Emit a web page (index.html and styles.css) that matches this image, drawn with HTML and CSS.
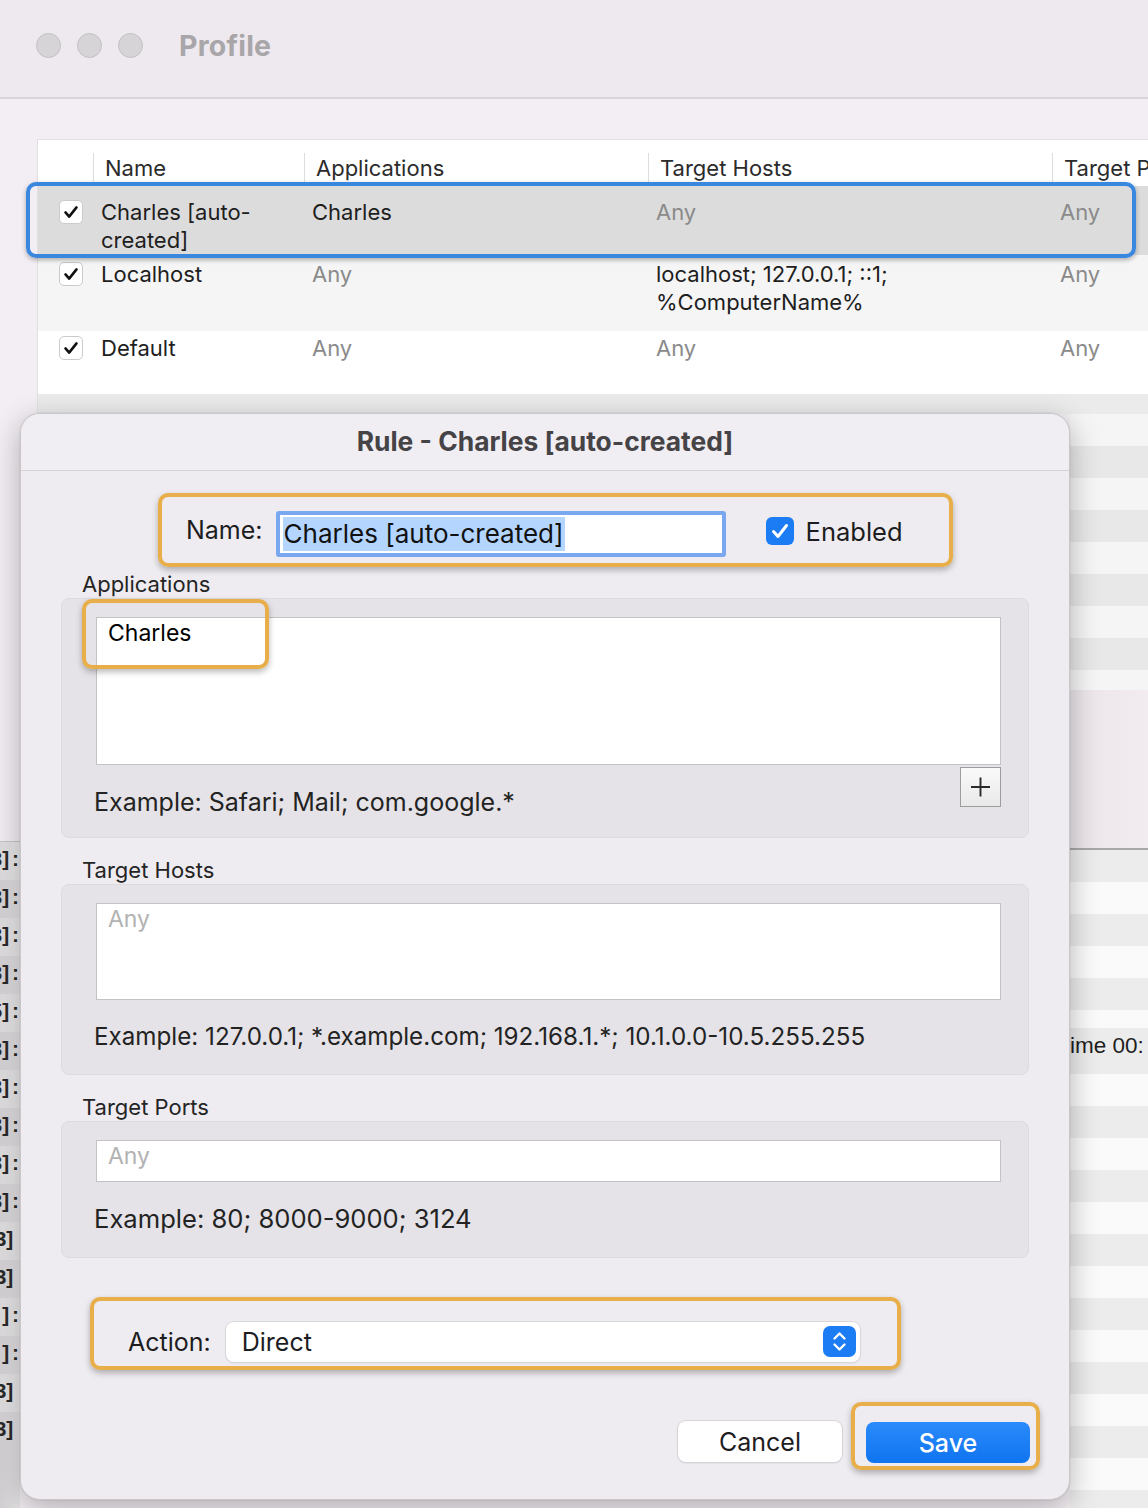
FILE: index.html
```html
<!DOCTYPE html>
<html>
<head>
<meta charset="utf-8">
<title>Profile</title>
<link rel="stylesheet" href="styles.css">
</head>
<body>
<div class="window">
  <header class="titlebar">
    <div class="lights"><span class="light"></span><span class="light"></span><span class="light"></span></div>
    <div class="wtitle">Profile</div>
  </header>
  <main class="content">
    <section class="table">
      <div class="thead">
        <div class="th th-first"></div>
        <div class="th">Name</div>
        <div class="th">Applications</div>
        <div class="th">Target Hosts</div>
        <div class="th">Target Ports</div>
      </div>
      <div class="tr tr-sel">
        <div class="td td-check"><span class="cbox"><svg viewBox="0 0 24 24" width="24" height="24"><path d="M6 12.5l4 4.5 8-10" fill="none" stroke="#111" stroke-width="2.8" stroke-linecap="round" stroke-linejoin="round"/></svg></span></div>
        <div class="td">Charles [auto-<br>created]</div>
        <div class="td">Charles</div>
        <div class="td muted">Any</div>
        <div class="td muted">Any</div>
      </div>
      <div class="tr tr-alt">
        <div class="td td-check"><span class="cbox"><svg viewBox="0 0 24 24" width="24" height="24"><path d="M6 12.5l4 4.5 8-10" fill="none" stroke="#111" stroke-width="2.8" stroke-linecap="round" stroke-linejoin="round"/></svg></span></div>
        <div class="td">Localhost</div>
        <div class="td muted">Any</div>
        <div class="td">localhost; 127.0.0.1; ::1;<br>%ComputerName%</div>
        <div class="td muted">Any</div>
      </div>
      <div class="tr tr-last">
        <div class="td td-check"><span class="cbox"><svg viewBox="0 0 24 24" width="24" height="24"><path d="M6 12.5l4 4.5 8-10" fill="none" stroke="#111" stroke-width="2.8" stroke-linecap="round" stroke-linejoin="round"/></svg></span></div>
        <div class="td">Default</div>
        <div class="td muted">Any</div>
        <div class="td muted">Any</div>
        <div class="td muted">Any</div>
      </div>
      <div class="tfill"></div>
      <div class="sel-ring"></div>
    </section>

    <section class="backdrop">
      <div class="bd-left">
        <div class="log">
          <div class="log-row"><span>3] :</span></div>
          <div class="log-row"><span>3] :</span></div>
          <div class="log-row"><span>3] :</span></div>
          <div class="log-row"><span>3] :</span></div>
          <div class="log-row"><span>5] :</span></div>
          <div class="log-row"><span>3] :</span></div>
          <div class="log-row"><span>3] :</span></div>
          <div class="log-row"><span>3] :</span></div>
          <div class="log-row"><span>3] :</span></div>
          <div class="log-row"><span>3] :</span></div>
          <div class="log-row"><span>3]&nbsp;&nbsp;</span></div>
          <div class="log-row"><span>3]&nbsp;&nbsp;</span></div>
          <div class="log-row"><span>] :</span></div>
          <div class="log-row"><span>] :</span></div>
          <div class="log-row"><span>3]&nbsp;&nbsp;</span></div>
          <div class="log-row"><span>3]&nbsp;&nbsp;</span></div>
        </div>
      </div>
      <div class="bd-mid"></div>
      <div class="bd-right">
        <div class="stripes-a"></div>
        <div class="bd-panel"></div>
        <div class="stripes-b">
          <div class="time-row">ime 00:</div>
        </div>
      </div>
    </section>
  </main>
</div>

<div class="dialog">
  <div class="dlg-head">Rule - Charles [auto-created]</div>
  <div class="dlg-body">
    <div class="hl name-row">
      <span class="lbl">Name:</span>
      <div class="name-input"><span class="selected">Charles [auto-created]</span></div>
      <span class="enable-box"><svg viewBox="0 0 28 28" width="28" height="28"><rect x="0" y="0" width="28" height="28" rx="6" fill="#1b7cf4"/><path d="M7.5 14.5l4.5 5 8.5-11" fill="none" stroke="#fff" stroke-width="3" stroke-linecap="round" stroke-linejoin="round"/></svg></span>
      <span class="enable-lbl">Enabled</span>
    </div>

    <div class="sec-label">Applications</div>
    <div class="group">
      <div class="field field-apps"><span class="val">Charles</span></div>
      <div class="foot foot-apps">
        <span class="example">Example: Safari; Mail; com.google.*</span>
        <span class="plus"><svg viewBox="0 0 40 40" width="39" height="38"><path d="M20 10v20M10 20h20" stroke="#2a2a2a" stroke-width="2"/></svg></span>
      </div>
      <div class="hl apps-hl"></div>
    </div>

    <div class="sec-label">Target Hosts</div>
    <div class="group">
      <div class="field field-hosts"><span class="ph">Any</span></div>
      <div class="foot foot-hosts">
        <span class="example">Example: 127.0.0.1; *.example.com; 192.168.1.*; 10.1.0.0-10.5.255.255</span>
      </div>
    </div>

    <div class="sec-label">Target Ports</div>
    <div class="group">
      <div class="field field-ports"><span class="ph">Any</span></div>
      <div class="foot foot-ports">
        <span class="example">Example: 80; 8000-9000; 3124</span>
      </div>
    </div>

    <div class="hl action-row">
      <span class="lbl">Action:</span>
      <div class="select">
        <span class="sel-val">Direct</span>
        <span class="stepper"><svg viewBox="0 0 33 31" width="33" height="31"><rect width="33" height="31" rx="7" fill="#1b7cf4"/><path d="M11.5 12.5l5-5 5 5M11.5 18.5l5 5 5-5" fill="none" stroke="#fff" stroke-width="2.4" stroke-linecap="round" stroke-linejoin="round"/></svg></span>
      </div>
    </div>

    <div class="buttons">
      <button class="btn btn-cancel">Cancel</button>
      <div class="hl save-hl"><button class="btn btn-save">Save</button></div>
    </div>
  </div>
</div>
</body>
</html>
```

FILE: styles.css
```css
* { box-sizing: border-box; }
html, body { margin: 0; padding: 0; }
body {
  width: 1148px;
  height: 1508px;
  overflow: hidden;
  position: relative;
  background: #f1ecf1;
  font-family: "Inter", "Noto Sans", sans-serif;
  color: #1d1d1f;
}

.window { width: 1148px; height: 1508px; display: flex; flex-direction: column; }

.titlebar {
  height: 99px;
  flex: none;
  background: #eee9ee;
  border-bottom: 2px solid #d9d4d9;
  display: flex;
  align-items: center;
  padding: 0 0 6px 36px;
}
.lights { display: flex; gap: 16px; }
.light {
  width: 25px; height: 25px; border-radius: 50%;
  background: #d7d4d7;
  border: 1px solid #c3c0c3;
}
.wtitle {
  margin-left: 36px;
  font-size: 28.5px;
  font-weight: 700;
  color: #a9a6a9;
  letter-spacing: 0.2px;
}

.content { flex: 1; display: flex; flex-direction: column; background: #f3eef3; }

/* table */
.table {
  position: relative;
  margin: 40px 0 0 37px;
  background: #fff;
  border-top: 1px solid #e2dfe2;
  border-left: 1px solid #e2dfe2;
  font-size: 22px;
}
.thead, .tr {
  display: grid;
  grid-template-columns: 55px 211px 344px 404px 1fr;
}
.thead { height: 46px; }
.th {
  margin-top: 13px;
  height: 33px;
  line-height: 31px;
  border-left: 1px solid #dddddd;
  padding-left: 11px;
  color: #2b2b2b;
  white-space: nowrap;
  overflow: hidden;
}
.th-first { border-left: none; }
.tr { line-height: 28px; color: #1e1e1e; }
.td { padding-left: 8px; white-space: nowrap; }
.td-check { padding-left: 21px; }
.muted { color: #8a8a8a; }
.tr-sel { height: 69px; padding-top: 12px; background: #dcdcdc; }
.tr-alt { height: 76px; padding-top: 5px; background: #f5f5f5; }
.tr-last { height: 63px; padding-top: 3px; background: #fff; }
.cbox {
  display: inline-flex;
  width: 24px; height: 24px;
  margin-top: 2px;
  background: #fff;
  border: 1px solid #cbcbcb;
  border-radius: 5px;
  align-items: center; justify-content: center;
}
.cbox svg { width: 22px; height: 22px; }
.tfill { height: 20px; background: #ebebeb; }

.sel-ring {
  position: absolute;
  left: -12px; top: 42px;
  width: 1110px; height: 76px;
  border: 4px solid #3a87e0;
  border-radius: 10px;
  box-shadow: 0 2px 5px rgba(0,0,0,0.3);
}

/* backdrop behind dialog */
.backdrop {
  flex: 1;
  display: grid;
  grid-template-columns: 20px 1fr 78px;
}
.bd-left { display: flex; flex-direction: column; padding-top: 427px; }
.log {
  flex: 1;
  background: linear-gradient(90deg, #d2d0d2, #e6e4e6);
  border-top: 1px solid #c9c6c9;
}
.log-row {
  height: 38px;
  display: flex;
  justify-content: flex-end;
  align-items: center;
  overflow: hidden;
  font-family: "Liberation Sans", sans-serif;
  font-size: 21px;
  font-weight: 700;
  color: #2a2a2a;
  white-space: nowrap;
  word-spacing: -3px;
  padding-bottom: 4px;
}
.log-row span { flex: none; margin-right: 1px; }
.log-row:nth-child(odd) { background: rgba(255,255,255,0.25); }
.bd-right { display: flex; flex-direction: column; }
.stripes-a {
  height: 276px;
  background: repeating-linear-gradient(180deg, #f5f5f5 0 32px, #e8e8e8 32px 64px);
}
.bd-panel {
  height: 160px;
  background: linear-gradient(90deg, #ebe5ea, #f2ecf1);
  border-bottom: 2px solid #a9a7a9;
}
.stripes-b {
  flex: 1;
  padding-top: 178px;
  background: repeating-linear-gradient(180deg, #ececec 0 32px, #fafafa 32px 64px);
}
.time-row {
  font-family: "Liberation Sans", sans-serif;
  font-size: 22.5px;
  line-height: 36px;
  color: #1e1e1e;
  white-space: nowrap;
  background: #ececec;
}

/* dialog */
.dialog {
  position: absolute;
  left: 20px; top: 413px;
  width: 1050px; height: 1087px;
  background: #eeecf0;
  border: 1px solid #cbc8cc;
  border-radius: 20px;
  box-shadow: 0 8px 30px rgba(0,0,0,0.28), 0 0 0 1px rgba(0,0,0,0.04);
  overflow: hidden;
}
.dlg-head {
  height: 57px;
  border-bottom: 1px solid #d5d2d6;
  background: #f0eef2;
  text-align: center;
  line-height: 54px;
  font-size: 26.4px;
  font-weight: 700;
  color: #464347;
}
.dlg-body {
  display: flex;
  flex-direction: column;
  padding: 0 40px 0 40px;
}

.hl {
  border: 4px solid #e8ae4a;
  border-radius: 10px;
  box-shadow: 0 3px 6px rgba(0,0,0,0.28);
}

.lbl { font-size: 25px; color: #1d1d1f; }

.name-row {
  align-self: flex-start;
  margin: 22px 0 0 97px;
  width: 795px; height: 74px;
  display: flex;
  align-items: center;
  padding-left: 24px;
}
.name-input {
  margin: 8px 0 0 13px;
  width: 450px; height: 46px;
  background: #fff;
  border: 4px solid #7aa8f0;
  border-radius: 3px;
  display: flex; align-items: center;
  padding-left: 3px;
}
.selected {
  background: #b4d5fe;
  font-size: 26px;
  line-height: 34px;
  color: #111;
  padding: 0 1px;
}
.enable-box { margin-left: 40px; display: inline-flex; margin-top: 2px; }
.enable-lbl { margin-left: 12px; font-size: 25.5px; color: #1d1d1f; margin-top: 2px; }

.sec-label {
  margin: 4px 0 1px 21px;
  font-size: 22px;
  line-height: 26px;
  color: #242424;
}
.sec-label ~ .sec-label { margin-top: 19px; }

.group {
  position: relative;
  width: 968px;
  background: #e5e3e7;
  border: 1px solid #dddbde;
  border-radius: 8px;
  padding: 18px 27px 0 34px;
}
.field {
  background: #fff;
  border: 1px solid #c3c3c5;
  padding-left: 11px;
}
.field-apps { height: 148px; }
.field-hosts { height: 97px; }
.field-ports { height: 42px; }
.val { display: block; font-size: 23px; line-height: 30px; color: #000; }
.ph { display: block; font-size: 23px; line-height: 30px; color: #b2b2b2; }
.foot { display: flex; justify-content: space-between; align-items: flex-start; }
.foot-apps { height: 72px; }
.foot-hosts { height: 74px; }
.foot-ports { height: 75px; }
.example {
  margin-left: -2px;
  padding-top: 22px;
  font-size: 25px;
  line-height: 30px;
  color: #232323;
  white-space: nowrap;
}
.foot-hosts .example { font-size: 24.2px; }
.foot-ports .example { font-size: 25.6px; }
.plus {
  margin-top: 2px;
  width: 41px; height: 40px;
  border: 1px solid #9d9d9d;
  background: linear-gradient(#fafafa, #e9e9e9);
  display: inline-flex; align-items: center; justify-content: center;
}
.apps-hl {
  position: absolute;
  left: 20px; top: 0px;
  width: 187px; height: 70px;
}

.action-row {
  align-self: flex-start;
  margin: 39px 0 0 29px;
  width: 811px; height: 73px;
  display: flex; align-items: center;
  padding-left: 34px;
  padding-top: 16px;
}
.select {
  margin-left: 15px;
  width: 634px; height: 40px;
  background: #fff;
  border-radius: 8px;
  box-shadow: 0 0 0 1px #d9d7da, 0 1px 2px rgba(0,0,0,0.15);
  display: flex; align-items: center; justify-content: space-between;
  padding: 0 4px 0 16px;
}
.sel-val { font-size: 25px; color: #1d1d1f; }
.stepper { display: inline-flex; }

.buttons {
  margin-top: 32px;
  display: flex;
  justify-content: flex-end;
  align-items: flex-start;
  margin-right: -11px;
}
.btn {
  font-family: inherit;
  font-size: 25px;
  border: none;
  width: 164px; height: 41px;
  border-radius: 8px;
  padding: 0;
}
.btn-cancel {
  margin-top: 19px;
  margin-right: 9px;
  background: #fff;
  color: #1d1d1f;
  box-shadow: 0 0 0 1px #d6d4d7, 0 1px 2px rgba(0,0,0,0.15);
}
.save-hl {
  padding: 16px 6px 3px 11px;
}
.btn-save {
  background: linear-gradient(#2b8bfb, #0f74f0);
  color: #fff;
  font-weight: 500;
}
```
